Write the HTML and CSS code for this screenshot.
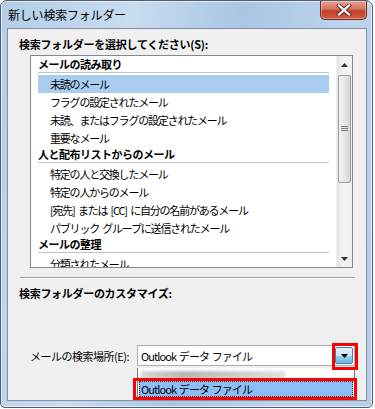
FILE: index.html
```html
<!DOCTYPE html>
<html lang="ja">
<head>
    <meta charset="UTF-8">
    <meta name="viewport" content="width=device-width, initial-scale=1.0">
    <title>新しい検索フォルダー</title>
    <link rel="stylesheet" href="styles.css">
</head>
<body>
    <div class="window">
        <div class="titlebar">
            <span class="title">新しい検索フォルダー</span>
            <div class="close-btn">
                <svg width="16" height="12" viewBox="0 0 16 12">
                    <path d="M3 1.5 L13 10.5 M13 1.5 L3 10.5" stroke="#5a2a2a" stroke-width="4" stroke-linecap="square"/>
                    <path d="M3 1.5 L13 10.5 M13 1.5 L3 10.5" stroke="#fff" stroke-width="2.2" stroke-linecap="square"/>
                </svg>
            </div>
        </div>

        <div class="client">
            <div class="label bold label-select">検索フォルダーを選択してください(S):</div>

            <div class="listbox">
                <div class="list-items">
                    <div class="group">メールの読み取り</div>
                    <div class="item selected">未読のメール</div>
                    <div class="item">フラグの設定されたメール</div>
                    <div class="item">未読、またはフラグの設定されたメール</div>
                    <div class="item">重要なメール</div>
                    <div class="group">人と配布リストからのメール</div>
                    <div class="item">特定の人と交換したメール</div>
                    <div class="item">特定の人からのメール</div>
                    <div class="item">[宛先] または [CC] に自分の名前があるメール</div>
                    <div class="item">パブリック グループに送信されたメール</div>
                    <div class="group">メールの整理</div>
                    <div class="item">分類されたメール</div>
                </div>
                <div class="scrollbar">
                    <div class="sb-arrow">
                        <svg width="7" height="4" viewBox="0 0 7 4"><path d="M0 4 L3.5 0 L7 4 Z" fill="#333"/></svg>
                    </div>
                    <div class="sb-track">
                        <div class="sb-thumb">
                            <svg width="7" height="6" viewBox="0 0 7 6"><path d="M0 0.5 H7 M0 2.5 H7 M0 4.5 H7" stroke="#7a7a7a" stroke-width="1"/></svg>
                        </div>
                    </div>
                    <div class="sb-arrow">
                        <svg width="7" height="4" viewBox="0 0 7 4"><path d="M0 0 L3.5 4 L7 0 Z" fill="#333"/></svg>
                    </div>
                </div>
            </div>

            <div class="separator"></div>
            <div class="label bold label-custom">検索フォルダーのカスタマイズ:</div>

            <div class="search-row">
                <span class="row-label">メールの検索場所(E):</span>
                <div class="combo">
                    <span class="combo-text">Outlook データ ファイル</span>
                    <div class="combo-btn">
                        <svg width="7" height="4" viewBox="0 0 7 4"><path d="M0 0 L3.5 4 L7 0 Z" fill="#000"/></svg>
                    </div>
                </div>
            </div>

            <div class="dropdown">
                <div class="dd-blur"></div>
                <div class="dd-item">Outlook データ ファイル</div>
            </div>
            <div class="mark mark-btn"></div>
            <div class="mark mark-item"></div>
        </div>
    </div>
</body>
</html>
```

FILE: styles.css
```css
body {
    margin: 0;
    padding: 0;
    background-color: #fff;
    font-family: "Noto Sans CJK JP", "Noto Sans", sans-serif;
    font-size: 11px;
    color: #000;
    overflow: hidden;
}

.window {
    position: relative;
    width: 371px;
    height: 406px;
    border: 1px solid #4f5d6e;
    border-radius: 7px 7px 5px 5px;
    background: linear-gradient(100deg, #b3cde8 0%, #c9dcf0 30%, #a9c6e4 55%, #bed4ec 80%, #b4cde8 100%);
    box-shadow: inset 0 0 0 1px rgba(255, 255, 255, 0.6);
    display: flex;
    flex-direction: column;
}

.titlebar {
    height: 27px;
    display: flex;
    align-items: flex-start;
    justify-content: space-between;
}

.title {
    font-size: 12px;
    margin: 5px 0 0 7px;
    letter-spacing: -0.2px;
}

.close-btn {
    width: 45px;
    height: 18px;
    margin-right: 5px;
    border: 1px solid #6b2a22;
    border-top: none;
    border-radius: 0 0 5px 5px;
    background: linear-gradient(#e8a493 0%, #d4705a 45%, #c2402a 55%, #d35a3e 100%);
    box-shadow: inset 0 0 0 1px rgba(255, 255, 255, 0.35);
    display: flex;
    align-items: center;
    justify-content: center;
}

.client {
    position: relative;
    flex: 1;
    margin: 0 5px 6px 6px;
    border: 1px solid #7f8fa3;
    background-color: #f0f0f0;
    display: flex;
    flex-direction: column;
}

.label {
    margin-left: 11px;
}

.bold {
    font-weight: bold;
}

.label-select {
    margin-top: 7px;
    letter-spacing: -0.25px;
}

.label-custom {
    margin-top: 6px;
    letter-spacing: -0.3px;
}

.listbox {
    margin: 3px 0 0 22px;
    width: 321px;
    height: 211px;
    border: 1px solid #828790;
    background-color: #fff;
    display: flex;
    overflow: hidden;
}

.list-items {
    flex: 1;
    padding: 0 7px;
    overflow: hidden;
}

.group {
    font-weight: bold;
    height: 15px;
    line-height: 15px;
    border-bottom: 1px solid #c3c3c3;
    margin-bottom: 2px;
    letter-spacing: -0.5px;
}

.list-items .group:first-child {
    margin-top: 1px;
}

.item {
    height: 18px;
    line-height: 18px;
    padding-left: 12px;
    letter-spacing: -1.2px;
    word-spacing: 2px;
    white-space: nowrap;
}

.item.selected {
    background-color: #a8cdf1;
}

.scrollbar {
    width: 15px;
    display: flex;
    flex-direction: column;
    background: linear-gradient(90deg, #e4e4e4, #f4f4f4 40%, #f0f0f0);
    border-left: 1px solid #f0f0f0;
}

.sb-arrow {
    height: 17px;
    display: flex;
    align-items: center;
    justify-content: center;
}

.sb-track {
    flex: 1;
    padding-top: 2px;
}

.sb-thumb {
    height: 106px;
    margin: 0 1px;
    border: 1px solid #9b9b9b;
    border-radius: 2px;
    background: linear-gradient(90deg, #f4f4f4, #e6e6e6 50%, #d6d6d6);
    display: flex;
    align-items: center;
    justify-content: center;
}

.separator {
    margin: 9px 0 0 12px;
    width: 335px;
    height: 0;
    border-top: 1px solid #a0a0a0;
    border-bottom: 1px solid #fff;
}

.search-row {
    display: flex;
    align-items: center;
    margin: 44px 0 0 22px;
}

.row-label {
    width: 107px;
    letter-spacing: -0.5px;
}

.combo {
    width: 216px;
    height: 19px;
    border: 1px solid #abadb3;
    background-color: #fff;
    display: flex;
    align-items: center;
    justify-content: space-between;
}

.combo-text {
    margin-left: 3px;
    letter-spacing: -0.9px;
    word-spacing: 1px;
}

.combo-btn {
    width: 16px;
    height: 15px;
    margin-right: 1px;
    border: 1px solid #3c7fb1;
    border-radius: 2px;
    background: linear-gradient(#e5f4fc 0%, #c4e5f6 50%, #98d1ef 51%, #6ab8e3 100%);
    display: flex;
    align-items: center;
    justify-content: center;
}

.dropdown {
    position: absolute;
    left: 129px;
    top: 339px;
    width: 216px;
    height: 30px;
    border: 1px solid #7a7a7a;
    border-top: none;
    background-color: #fff;
}

.dd-blur {
    margin: 3px 0 0 3px;
    width: 144px;
    height: 8px;
    background: linear-gradient(90deg, #d8d8d8, #b5b5b5 30%, #c8c8c8 60%, #e0e0e0);
    filter: blur(1.5px);
}

.dd-item {
    margin: 2px 1px 0 1px;
    height: 16px;
    line-height: 16px;
    padding-left: 2px;
    background-color: #8cbdf6;
    outline: 1px dotted #333;
    outline-offset: -1px;
    letter-spacing: -0.9px;
    word-spacing: 1px;
}

.mark {
    position: absolute;
    border: 3px solid #f00;
}

.mark-btn {
    left: 324px;
    top: 314px;
    width: 20px;
    height: 21px;
}

.mark-item {
    left: 125px;
    top: 349px;
    width: 218px;
    height: 16px;
}
```
